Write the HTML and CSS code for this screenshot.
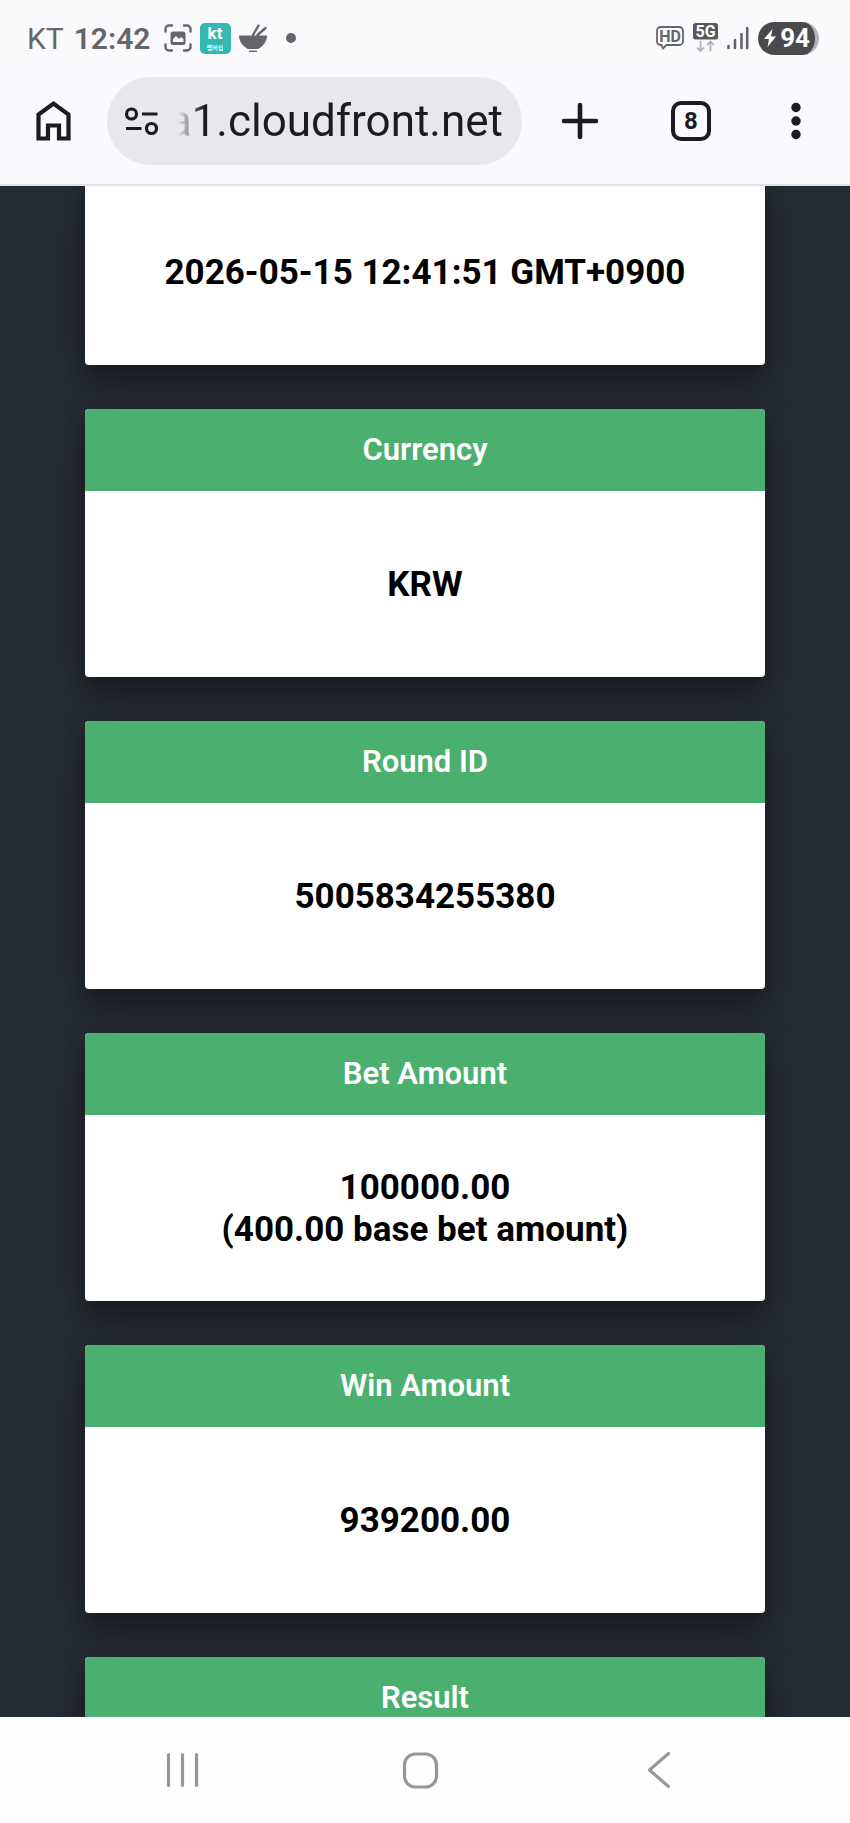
FILE: index.html
```html
<!DOCTYPE html>
<html lang="en">
<head>
  <meta charset="UTF-8">
  <meta name="viewport" content="width=device-width, initial-scale=1">
  <title>Round details</title>
  <link rel="stylesheet" href="styles.css">
</head>
<body>

  <div class="status-bar">
    <div class="status-left">
      <span class="carrier">KT</span>
      <span class="clock">12:42</span>
      <svg class="icon-capture" width="28" height="28" viewBox="0 0 28 28">
        <path d="M1.500 7.500V5a3.500 3.500 0 0 1 3.500-3.500h3M20 1.500h3A3.500 3.500 0 0 1 26.500 5v2.500M26.500 20.500V23a3.500 3.500 0 0 1-3.500 3.500h-3M8 26.500H5A3.500 3.500 0 0 1 1.500 23v-2.500" fill="none" stroke="#66656a" stroke-width="2.400" stroke-linecap="round"/>
        <rect x="6.500" y="7.500" width="15" height="13.500" rx="2.500" fill="#66656a"/>
        <path d="M9 18v-3l3-3 3 3 2-2 2.500 2v3z" fill="#f8f8fa"/>
      </svg>
      <svg class="icon-kt" width="31" height="31" viewBox="0 0 31 31">
        <rect width="31" height="31" rx="5" fill="#35b8b2"/>
        <text class="kt-name" x="15" y="16" text-anchor="middle">kt</text>
        <text class="kt-sub" x="15" y="27" text-anchor="middle">멤버십</text>
      </svg>
      <svg class="icon-bowl" width="28" height="28" viewBox="0 0 28 28">
        <path d="M0 11.500h28c0 6-4 11-9 13.500H9C4 22.500 0 17.500 0 11.500z" fill="#66656a"/>
        <path d="M14 11l5.500-9.500M18.500 11l8-7" fill="none" stroke="#66656a" stroke-width="2.400" stroke-linecap="round"/>
        <path d="M10 27.300h8" stroke="#66656a" stroke-width="1.400"/>
      </svg>
      <span class="dot"></span>
    </div>
    <div class="status-right">
      <svg width="28" height="24" viewBox="0 0 28 24">
        <path d="M4.500 1h19A3.500 3.500 0 0 1 27 4.500v11a3.500 3.500 0 0 1-3.500 3.500H10.500L7 22.500 5.500 19H4.500A3.500 3.500 0 0 1 1 15.500v-11A3.500 3.500 0 0 1 4.500 1z" fill="none" stroke="#66656a" stroke-width="1.800"/>
        <text class="hd-text" x="14" y="16" text-anchor="middle">HD</text>
      </svg>
      <svg class="icon-5g" width="25" height="30" viewBox="0 0 25 30">
        <rect width="25" height="16.500" rx="2.500" fill="#59585c"/>
        <text class="net-text" x="12.500" y="14" text-anchor="middle">5G</text>
        <path d="M7.500 18v10M4 24.500l3.500 3.500 3.500-3.500M17.500 28.500v-10M14 22l3.500-3.500 3.500 3.500" fill="none" stroke="#b5b4b8" stroke-width="1.800"/>
      </svg>
      <svg class="icon-signal" width="22" height="24" viewBox="0 0 22 24">
        <path d="M1.500 20v2M8 14v8M14.500 8v14" stroke="#66656a" stroke-width="2.600" stroke-linecap="round"/>
        <path d="M20.200 2v20" stroke="#66656a" stroke-width="2.600" stroke-linecap="round"/>
      </svg>
      <div class="battery">
        <svg width="12" height="18" viewBox="0 0 12 18">
          <path d="M8.500 0L0 10h5L3.500 18 12 7.500H7z" fill="#fff"/>
        </svg>
        <span>94</span>
      </div>
    </div>
  </div>

  <header class="toolbar">
    <button class="tool-btn" aria-label="Home">
      <svg width="40" height="44" viewBox="0 0 40 44">
        <path d="M4.500 39.500V15.500L19.500 4.500l15 11v24H25V26.500H14v13z" fill="none" stroke="#1c1b20" stroke-width="4.200"/>
      </svg>
    </button>
    <div class="address">
      <svg class="icon-tune" width="34" height="30" viewBox="0 0 34 30">
        <g fill="none" stroke="#1c1b20" stroke-width="3.200">
          <circle cx="7.500" cy="8" r="5"/>
          <path d="M18 8h15.500M2 22.500h15.500"/>
          <circle cx="27.500" cy="22.500" r="5"/>
        </g>
      </svg>
      <input class="url" type="text" aria-label="Address" value="a1.cloudfront.net">
    </div>
    <button class="tool-btn new-tab" aria-label="New tab">
      <svg width="40" height="40" viewBox="0 0 40 40">
        <path d="M20 4v32M4 20h32" stroke="#1c1b20" stroke-width="4.600" stroke-linecap="round"/>
      </svg>
    </button>
    <button class="tool-btn tabs" aria-label="Open tabs">8</button>
    <button class="tool-btn menu" aria-label="Menu">
      <svg width="40" height="40" viewBox="0 0 40 40">
        <g fill="#1c1b20">
          <circle cx="20" cy="6.500" r="4.700"/>
          <circle cx="20" cy="20" r="4.700"/>
          <circle cx="20" cy="33.500" r="4.700"/>
        </g>
      </svg>
    </button>
  </header>

  <main class="page">
    <div class="cards">
      <section class="card">
        <p class="card-value">2026-05-15 12:41:51 GMT+0900</p>
      </section>
      <section class="card">
        <h2 class="card-title">Currency</h2>
        <p class="card-value">KRW</p>
      </section>
      <section class="card">
        <h2 class="card-title">Round ID</h2>
        <p class="card-value">5005834255380</p>
      </section>
      <section class="card">
        <h2 class="card-title">Bet Amount</h2>
        <p class="card-value">100000.00<br>(400.00 base bet amount)</p>
      </section>
      <section class="card">
        <h2 class="card-title">Win Amount</h2>
        <p class="card-value">939200.00</p>
      </section>
      <section class="card">
        <h2 class="card-title">Result</h2>
      </section>
    </div>
  </main>

  <nav class="nav-bar">
    <button class="nav-btn" aria-label="Recent apps">
      <svg width="40" height="40" viewBox="0 0 40 40">
        <path d="M5.500 4.500v31M19.500 4.500v31M33.500 4.500v31" stroke="#98969b" stroke-width="3.200" stroke-linecap="round"/>
      </svg>
    </button>
    <button class="nav-btn" aria-label="Home screen">
      <svg width="40" height="40" viewBox="0 0 40 40">
        <rect x="3.500" y="4" width="32" height="33" rx="11" fill="none" stroke="#98969b" stroke-width="3.200"/>
      </svg>
    </button>
    <button class="nav-btn" aria-label="Back">
      <svg width="40" height="40" viewBox="0 0 40 40">
        <path d="M29.500 3.500L10.500 20l19 16.500" fill="none" stroke="#98969b" stroke-width="3.200" stroke-linecap="round" stroke-linejoin="round"/>
      </svg>
    </button>
  </nav>

</body>
</html>
```
FILE: styles.css
```css
* {
  box-sizing: border-box;
}

body {
  margin: 0;
  height: 100vh;
  display: flex;
  flex-direction: column;
  font-family: Roboto, "Liberation Sans", sans-serif;
  background: #faf9fd;
}

button {
  padding: 0;
  border: 0;
  background: none;
  font-family: inherit;
  color: inherit;
  cursor: pointer;
}

svg {
  display: block;
}

/* phone status bar */
.status-bar {
  height: 76px;
  padding: 0 31px 0 27px;
  display: flex;
  justify-content: space-between;
  align-items: center;
  flex-shrink: 0;
  color: #66656a;
  font-size: 30px;
  background: #fafafc;
}

.status-left,
.status-right {
  display: flex;
  align-items: center;
}

.clock {
  margin-left: 10px;
  font-weight: 600;
}

.icon-capture {
  margin-left: 14px;
}

.icon-kt {
  margin-left: 8px;
}

.icon-bowl {
  margin-left: 8px;
}

.kt-name {
  font: 700 17px Roboto, sans-serif;
  fill: #fff;
}

.kt-sub {
  font: 500 6px "Noto Sans CJK KR", sans-serif;
  fill: #fff;
}

.dot {
  width: 10px;
  height: 10px;
  margin-left: 19px;
  border-radius: 50%;
  background: #66656a;
}

.status-right {
  gap: 9px;
}

.hd-text {
  font: 700 16px Roboto, sans-serif;
  fill: #66656a;
}

.net-text {
  font: 700 16px Roboto, sans-serif;
  fill: #fff;
}

.battery {
  height: 33px;
  padding: 0 5px 0 6px;
  display: flex;
  align-items: center;
  gap: 4px;
  border-right: 4px solid #b5b4b8;
  border-radius: 17px;
  color: #fff;
  font-size: 26px;
  font-weight: 700;
  background: #4a494c;
}

/* browser toolbar */
.toolbar {
  height: 110px;
  padding: 0 34px 18px;
  display: flex;
  align-items: center;
  flex-shrink: 0;
  color: #1c1b20;
  border-bottom: 2px solid #e2e1e6;
}

.tool-btn {
  flex-shrink: 0;
}

.address {
  flex: 1;
  min-width: 0;
  height: 88px;
  margin-left: 33px;
  padding: 0 19px 0 17px;
  display: flex;
  align-items: center;
  border-radius: 44px;
  background: #e9e7ed;
}

.icon-tune {
  flex-shrink: 0;
}

/* the start of a long address fades out */
.url {
  flex: 1;
  min-width: 0;
  padding: 0;
  border: 0;
  outline: 0;
  background: none;
  color: #1c1b20;
  font-family: inherit;
  font-size: 44px;
  text-align: right;
  -webkit-mask-image: linear-gradient(to right, transparent 20px, #000 46px);
  mask-image: linear-gradient(to right, transparent 20px, #000 46px);
}

.new-tab {
  margin-left: 38px;
}

.tabs {
  width: 40px;
  height: 40px;
  margin-left: 71px;
  border: 4px solid #1c1b20;
  border-radius: 10px;
  font-size: 24px;
  font-weight: 700;
}

.menu {
  margin-left: 65px;
}

/* page */
.page {
  flex: 1;
  min-height: 0;
  overflow: hidden;
  background: #262c33;
}

/* list is scrolled a little under the toolbar */
.cards {
  width: 80%;
  margin: -7px auto 0;
  display: flex;
  flex-direction: column;
  gap: 44px;
}

.card {
  border-radius: 4px;
  overflow: hidden;
  text-align: center;
  background: #fff;
  box-shadow: 0 10px 20px rgba(0, 0, 0, 0.22), 0 18px 44px rgba(0, 0, 0, 0.28);
}

.card-title {
  margin: 0;
  padding: 20px;
  color: #fff;
  font-size: 31px;
  line-height: 42px;
  font-weight: 600;
  background: #4bb06f;
}

.card-value {
  min-height: 186px;
  margin: 0;
  padding: 22px 20px 20px;
  display: flex;
  align-items: center;
  justify-content: center;
  color: #000;
  font-size: 35px;
  line-height: 42px;
  font-weight: 700;
}

/* system navigation */
.nav-bar {
  height: 106px;
  padding: 0 72px 0 64px;
  display: grid;
  grid-template-columns: repeat(3, 1fr);
  place-items: center;
  flex-shrink: 0;
  background: #fefefe;
}
```
